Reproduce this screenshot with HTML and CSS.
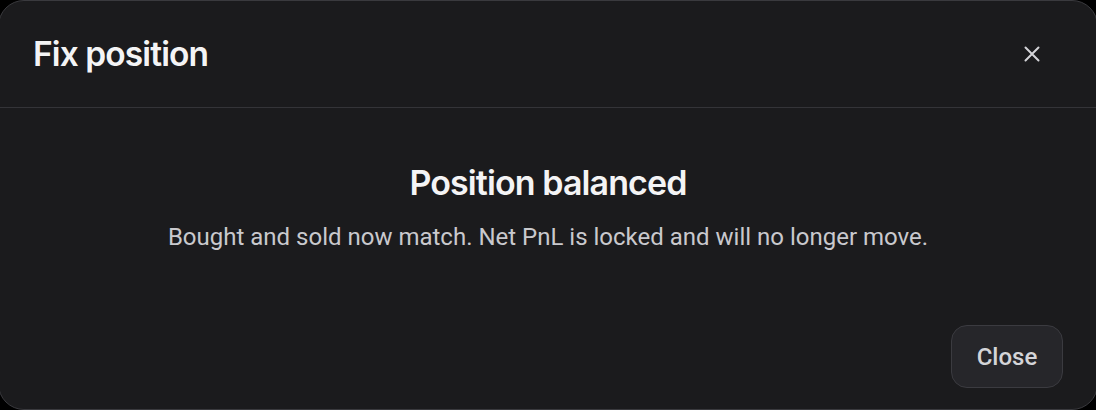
FILE: index.html
```html
<!DOCTYPE html>
<html lang="en">
<head>
  <meta charset="UTF-8" />
  <title>Fix position</title>
  <link rel="stylesheet" href="styles.css">
</head>
<body>
  <div class="modal">
    <div class="modal-header">
      <h2>Fix position</h2>
      <button class="close-x" aria-label="Close">
        <svg width="18" height="18" viewBox="0 0 18 18">
          <path d="M2.5 2.5 L15.5 15.5 M15.5 2.5 L2.5 15.5" stroke="#d4d4d8" stroke-width="2" stroke-linecap="round" />
        </svg>
      </button>
    </div>

    <div class="modal-body">
      <h3>Position balanced</h3>
      <p>Bought and sold now match. Net PnL is locked and will no longer move.</p>
    </div>

    <div class="modal-footer">
      <button class="btn">Close</button>
    </div>
  </div>
</body>
</html>
```

FILE: styles.css
```css
html, body {
  margin: 0;
  padding: 0;
  height: 100%;
  background: #000;
  font-family: Roboto, 'Liberation Sans', sans-serif;
  overflow: hidden;
}

.modal {
  box-sizing: border-box;
  height: 410px;
  margin: 0 -2px;
  background-color: #1b1b1d;
  border: 1px solid #3a3a3e;
  border-radius: 26px;
  display: flex;
  flex-direction: column;
}

.modal-header {
  height: 106px;
  display: flex;
  align-items: center;
  justify-content: space-between;
  padding: 0 56px 0 34px;
  border-bottom: 1px solid #343438;
}

.modal-header h2 {
  margin: 0;
  font-family: Inter, sans-serif;
  font-size: 33.5px;
  font-weight: 600;
  letter-spacing: -0.9px;
  color: #f4f4f5;
}

.close-x {
  background: none;
  border: none;
  padding: 0;
  width: 18px;
  height: 18px;
  cursor: pointer;
}

.modal-body {
  flex: 1;
  text-align: center;
  padding-top: 54px;
}

.modal-body h3 {
  margin: 0;
  font-family: Inter, sans-serif;
  font-size: 34px;
  font-weight: 600;
  letter-spacing: -0.9px;
  color: #f4f4f5;
}

.modal-body p {
  margin: 20px 0 0;
  font-size: 24px;
  color: #c9c9cd;
}

.modal-footer {
  display: flex;
  justify-content: flex-end;
  padding: 0 34px 21px;
}

.btn {
  width: 112px;
  height: 63px;
  background-color: #26262a;
  border: 1px solid #3b3b40;
  border-radius: 16px;
  color: #d4d4d8;
  font-family: Roboto, sans-serif;
  font-size: 24px;
  font-weight: 500;
  cursor: pointer;
}
```
